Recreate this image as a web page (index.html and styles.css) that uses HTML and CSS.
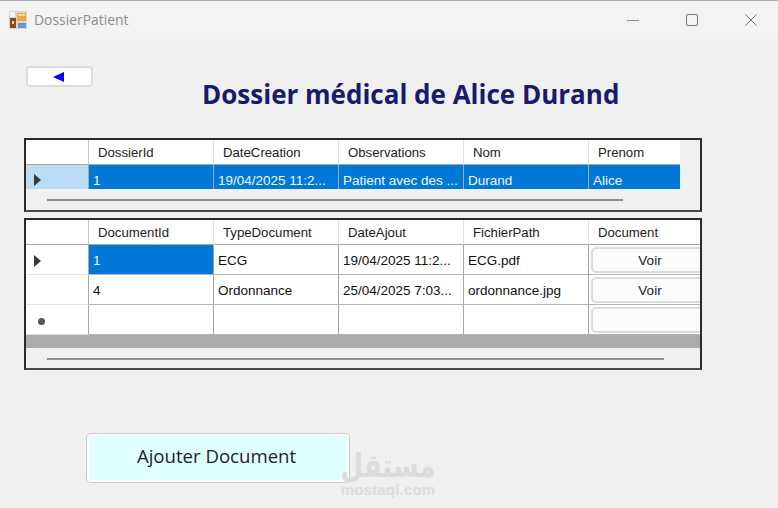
FILE: index.html
```html
<!DOCTYPE html>
<html lang="fr">
<head>
<meta charset="utf-8">
<title>DossierPatient</title>
<link rel="stylesheet" href="styles.css">
</head>
<body>
<div class="window">
  <header class="titlebar">
    <svg class="app-icon" width="18" height="18" viewBox="0 0 18 18">
      <rect x="0" y="0" width="18" height="18" fill="#d6d6d6"/>
      <rect x="1" y="1" width="5" height="5" fill="#f4f4f4"/>
      <rect x="8" y="2" width="9" height="8" fill="#e8a93c"/>
      <rect x="9" y="3" width="7" height="2" fill="#f7dc8e"/>
      <rect x="1" y="7" width="6" height="10" fill="#8f4a1c"/>
      <rect x="3" y="10" width="2" height="3" fill="#f0d9a8"/>
      <rect x="9" y="12" width="8" height="5" fill="#5b9bd5"/>
    </svg>
    <span class="app-title">DossierPatient</span>
    <div class="win-controls">
      <svg width="12" height="12" viewBox="0 0 12 12"><path d="M0 6.5H12" stroke="#8a8a8a" stroke-width="1"/></svg>
      <svg width="12" height="12" viewBox="0 0 12 12"><rect x="0.5" y="0.5" width="11" height="11" rx="1.5" fill="none" stroke="#777" stroke-width="1"/></svg>
      <svg width="12" height="12" viewBox="0 0 12 12"><path d="M0.5 0.5L11.5 11.5M11.5 0.5L0.5 11.5" stroke="#777" stroke-width="1"/></svg>
    </div>
  </header>

  <main class="content">
    <div class="top-row">
      <button class="back-btn" type="button" aria-label="Retour">
        <svg width="11" height="10" viewBox="0 0 11 10"><path d="M0 5L11 0V10Z" fill="#0000ff"/></svg>
      </button>
      <h1 class="page-title">Dossier médical de Alice Durand</h1>
    </div>

    <section class="grid-box grid-box-first">
      <div class="dgrid">
        <div class="hc rh"></div>
        <div class="hc">DossierId</div>
        <div class="hc">DateCreation</div>
        <div class="hc">Observations</div>
        <div class="hc">Nom</div>
        <div class="hc last">Prenom</div>

        <div class="dc rh rh-sel row-s"><span class="marker"></span></div>
        <div class="dc sel row-s">1</div>
        <div class="dc sel row-s">19/04/2025 11:2...</div>
        <div class="dc sel row-s">Patient avec des ...</div>
        <div class="dc sel row-s">Durand</div>
        <div class="dc sel row-s last">Alice</div>
      </div>
      <div class="hscroll hscroll-first"><div class="thumb thumb-first"></div></div>
    </section>

    <section class="grid-box grid-box-second">
      <div class="dgrid dgrid-wide">
        <div class="hc rh"></div>
        <div class="hc">DocumentId</div>
        <div class="hc">TypeDocument</div>
        <div class="hc">DateAjout</div>
        <div class="hc">FichierPath</div>
        <div class="hc last">Document</div>

        <div class="dc rh"><span class="marker"></span></div>
        <div class="dc sel">1</div>
        <div class="dc">ECG</div>
        <div class="dc">19/04/2025 11:2...</div>
        <div class="dc">ECG.pdf</div>
        <div class="dc btn-cell"><span class="voir">Voir</span></div>

        <div class="dc rh"></div>
        <div class="dc">4</div>
        <div class="dc">Ordonnance</div>
        <div class="dc">25/04/2025 7:03...</div>
        <div class="dc">ordonnance.jpg</div>
        <div class="dc btn-cell"><span class="voir">Voir</span></div>

        <div class="dc rh"><span class="star"></span></div>
        <div class="dc"></div>
        <div class="dc"></div>
        <div class="dc"></div>
        <div class="dc"></div>
        <div class="dc btn-cell"><span class="voir"></span></div>
      </div>
      <div class="grid-empty"></div>
      <div class="hscroll hscroll-second"><div class="thumb thumb-second"></div></div>
    </section>

    <button class="add-btn" type="button">Ajouter Document</button>
  </main>

  <div class="watermark">
    <span class="wm-ar" lang="ar" dir="rtl">مستقل</span>
    <span class="wm-en">mostaql.com</span>
  </div>
</div>
</body>
</html>
```

FILE: styles.css
```css
* { box-sizing: border-box; }

html, body {
  margin: 0;
  padding: 0;
  background: #f0f0f0;
}

.window {
  position: relative;
  width: 778px;
  height: 508px;
  overflow: hidden;
  background: #f0f0f0;
  font-family: "Liberation Sans", Arial, sans-serif;
}

.titlebar {
  display: flex;
  align-items: center;
  height: 39px;
  padding: 0 21px 0 9px;
  background: #f3f3f3;
  border-top: 1px solid #a9abb0;
}

.app-icon { flex: none; }

.app-title {
  margin: 0 0 2px 7px;
  font-family: "Open Sans", sans-serif;
  font-size: 13.9px;
  color: #8c8c8c;
}

.win-controls {
  display: flex;
  align-items: center;
  gap: 47px;
  margin-left: auto;
}

.content {
  display: flex;
  flex-direction: column;
  align-items: flex-start;
  padding-left: 24px;
}

.top-row {
  display: flex;
  align-items: flex-start;
  height: 99px;
  padding-top: 27px;
}

.back-btn {
  display: flex;
  align-items: center;
  justify-content: center;
  width: 67px;
  height: 21px;
  margin-left: 2px;
  padding: 0 2px 0 0;
  background: #fff;
  border: 2px solid #dcdcdc;
  border-radius: 4px;
}

.page-title {
  margin: 10px 0 0 109px;
  font-family: "Open Sans", sans-serif;
  font-size: 26px;
  font-weight: 700;
  line-height: 36px;
  white-space: nowrap;
  color: #191970;
}

.grid-box {
  width: 678px;
  overflow: hidden;
  background: #f0f0f0;
  border: 2px solid #2b2b2b;
  border-bottom-color: #4a4a4a;
}

.grid-box-first { height: 74px; }

.grid-box-second {
  height: 152px;
  margin-top: 6px;
}

.dgrid {
  display: grid;
  grid-template-columns: 63px repeat(4, 125px) 91px;
  grid-auto-rows: min-content;
  font-size: 13.5px;
  color: #111;
}

.dgrid-wide { grid-template-columns: 63px repeat(4, 125px) 120px; }

.hc {
  display: flex;
  align-items: center;
  height: 25px;
  padding-left: 9px;
  background: #fff;
  border-right: 1px solid #e2e2e2;
  border-bottom: 1px solid #a8a8a8;
  font-size: 13.2px;
  white-space: nowrap;
  color: #222;
}

.hc.rh { border-right: 1px solid #c8c8c8; }
.hc.last { border-right: 0; }

.dc {
  display: flex;
  align-items: center;
  height: 30px;
  padding: 2px 0 0 4px;
  background: #fff;
  border-right: 1px solid #a8a8a8;
  border-bottom: 1px solid #b4b4b4;
  white-space: nowrap;
}

.row-s {
  height: 24px;
  padding-top: 6px;
  border-bottom: 0;
}

.dc.last { border-right: 0; }

.dc.sel {
  background: #0078d7;
  color: #f2f8fd;
}

.dc.rh {
  padding-left: 8px;
  border-right-color: #a8a8a8;
  border-bottom-color: #e2e2e2;
}

.dc.rh-sel {
  padding-top: 6px;
  background: #bcdcf4;
}

.marker {
  width: 0;
  height: 0;
  border-top: 6px solid transparent;
  border-bottom: 6px solid transparent;
  border-left: 7px solid #3a3a3a;
}

.star {
  width: 7px;
  height: 7px;
  margin-left: 4px;
  margin-top: 2px;
  border-radius: 50%;
  background: #555;
}

.btn-cell {
  padding: 0 0 0 2px;
  border-right: 0;
}

.voir {
  display: flex;
  align-items: center;
  justify-content: center;
  width: 120px;
  height: 26px;
  padding-top: 2px;
  background: #fcfcfc;
  border: 2px solid #dcdcdc;
  border-radius: 5px;
  color: #222;
}

.grid-empty {
  height: 13px;
  background: #ababab;
}

.hscroll {
  display: flex;
  align-items: center;
  padding-left: 21px;
}

.hscroll-first { height: 22px; }
.hscroll-second { height: 22px; }

.thumb {
  height: 2px;
  background: #8c8c8c;
}

.thumb-first { width: 576px; }
.thumb-second { width: 617px; }

.add-btn {
  width: 262px;
  height: 48px;
  margin: 64px 0 0 63px;
  padding: 0 3px 6px 0;
  background: #e0ffff;
  border: 2px solid #fff;
  border-radius: 4px;
  box-shadow: 0 0 0 1px #c9c9c9;
  font-family: "Open Sans", sans-serif;
  font-size: 18.6px;
  color: #1c1c30;
}

.watermark {
  position: absolute;
  left: 340px;
  top: 451px;
  display: flex;
  flex-direction: column;
  align-items: center;
  width: 96px;
  color: #dcdcdc;
}

.wm-ar {
  font-family: "DejaVu Sans", sans-serif;
  font-size: 26px;
  font-weight: 700;
  line-height: 31px;
  transform: scaleY(1.25);
}

.wm-en {
  font-family: "Liberation Sans", sans-serif;
  font-size: 15px;
  font-weight: 700;
  line-height: 16px;
  letter-spacing: 0.2px;
}
```
